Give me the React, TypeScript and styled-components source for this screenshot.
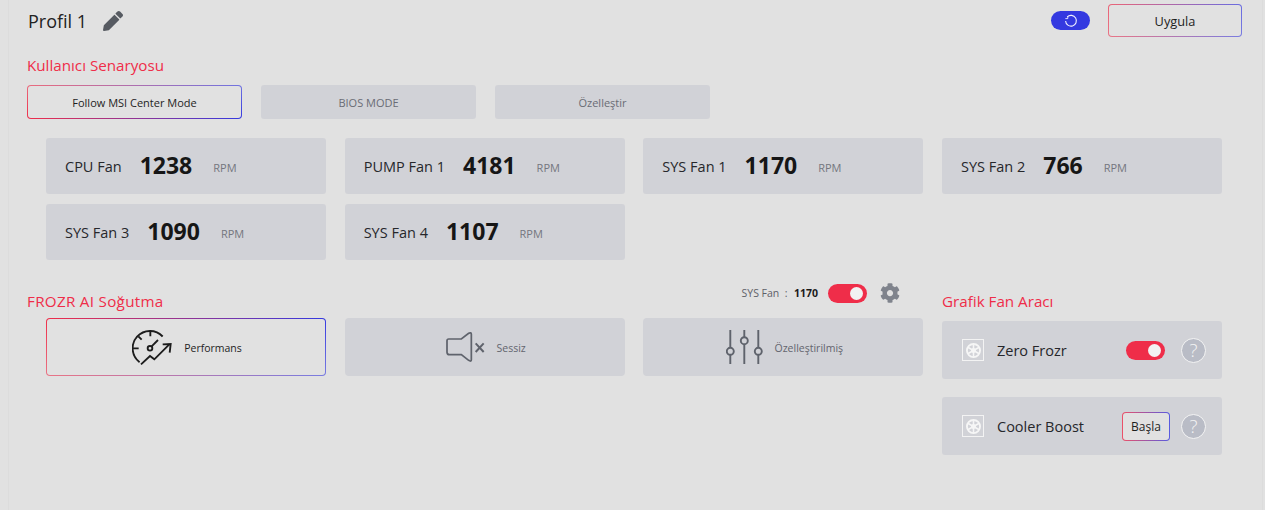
import styled, { createGlobalStyle } from 'styled-components';

const GlobalStyle = createGlobalStyle`
  html, body {
    margin: 0;
    padding: 0;
    background: #e1e1e1;
  }
  body {
    font-family: "Open Sans", "Noto Sans", sans-serif;
    color: #1e1e1e;
  }
`;

const RED = '#ef2d49';
const CARD = '#d1d2d7';
const fill = '#e1e1e1';
const veil = (a: number) => `rgba(225, 225, 225, ${a})`;

const gradientBorder = (top: number, bottom: number) => `
  linear-gradient(${fill}, ${fill}) padding-box,
  linear-gradient(to bottom, ${veil(top)}, ${veil(bottom)}) border-box,
  linear-gradient(to right, ${RED}, #3439e0) border-box
`;

const Page = styled.div`
  width: 1265px;
  height: 510px;
  box-sizing: border-box;
  padding: 0 23px 0 19px;
  overflow: hidden;
  background:
    linear-gradient(#dcdcdc, #dcdcdc) 8px 0 / 1px 100% no-repeat,
    linear-gradient(#dcdcdc, #dcdcdc) 1262px 0 / 1px 100% no-repeat,
    ${fill};
`;

const Header = styled.div`
  height: 42px;
  padding: 4px 0 0 9px;
  box-sizing: border-box;
  display: flex;
  align-items: flex-start;
  justify-content: space-between;
`;

const ProfileName = styled.div`
  display: flex;
  align-items: center;
  gap: 16px;
  height: 34px;
  font-size: 18px;
  color: #222;
`;

const HeaderActions = styled.div`
  display: flex;
  align-items: center;
  gap: 18px;
`;

const SyncPill = styled.div`
  width: 39px;
  height: 19px;
  border-radius: 10px;
  background: #3439e0;
  display: flex;
  align-items: center;
  justify-content: center;
`;

const GradientButton = styled.div<{ $w: number; $h: number; $size: number; $top?: number; $bottom?: number }>`
  width: ${({ $w }) => $w}px;
  height: ${({ $h }) => $h}px;
  box-sizing: border-box;
  display: flex;
  align-items: center;
  justify-content: center;
  font-size: ${({ $size }) => $size}px;
  color: #1e1e1e;
  border: 1px solid transparent;
  border-radius: 4px;
  background: ${({ $top, $bottom }) => gradientBorder($top ?? 0, $bottom ?? 0)};
`;

const SectionTitle = styled.div<{ $spacing?: number }>`
  font-size: 15.2px;
  line-height: 20px;
  color: ${RED};
  letter-spacing: ${({ $spacing }) => $spacing ?? 0}px;
`;

const ScenarioBlock = styled.section`
  padding-left: 8px;
  height: 83px;
  margin-top: 13px;
`;

const ScenarioRow = styled.div`
  margin-top: 10px;
  display: flex;
  gap: 19px;
`;

const FlatButton = styled.div`
  width: 215px;
  height: 34px;
  border-radius: 3px;
  background: ${CARD};
  color: #6a6c75;
  font-size: 11px;
  display: flex;
  align-items: center;
  justify-content: center;
`;

const FanGrid = styled.div`
  padding-left: 27px;
  display: grid;
  grid-template-columns: repeat(4, 280px);
  column-gap: 18.67px;
  row-gap: 10px;
`;

const FanCard = styled.div`
  height: 56px;
  border-radius: 3px;
  background: ${CARD};
  padding-left: 19px;
  display: flex;
  align-items: center;
`;

const FanName = styled.span`
  font-size: 14.5px;
  color: #26272b;
`;

const FanValue = styled.span`
  margin-left: 18px;
  margin-top: -2px;
  font-size: 23px;
  font-weight: 700;
  color: #161616;
`;

const FanUnit = styled.span`
  margin-left: 21px;
  margin-top: 3px;
  font-size: 11px;
  color: #74767e;
`;

const LowerArea = styled.div`
  margin-top: 19px;
  padding-left: 8px;
  display: flex;
`;

const FrozrColumn = styled.div`
  width: 915px;
`;

const FrozrHead = styled.div`
  height: 39px;
  display: flex;
  align-items: flex-start;
  justify-content: space-between;
  padding-right: 42px;
  ${SectionTitle} {
    margin-top: 12px;
  }
`;

const SysFan = styled.div`
  display: flex;
  align-items: center;
  height: 24px;
  margin-top: 2px;
  font-size: 10.5px;
  color: #5e6068;
  white-space: pre;
  b {
    margin-left: 1px;
    margin-right: 10px;
    color: #1b1b1b;
    font-size: 10.5px;
  }
  svg {
    margin-left: 13px;
  }
`;

const FrozrCards = styled.div`
  margin-left: 19px;
  display: grid;
  grid-template-columns: repeat(3, 280px);
  column-gap: 18.67px;
`;

const ModeCard = styled.div<{ $active?: boolean }>`
  height: 58px;
  box-sizing: border-box;
  padding-left: 2px;
  border-radius: 4px;
  border: 1px solid transparent;
  background: ${({ $active }) => ($active ? gradientBorder(0, 0.4) : CARD)};
  color: ${({ $active }) => ($active ? '#1e1e1e' : '#63656e')};
  font-size: 10.5px;
  display: flex;
  align-items: center;
  justify-content: center;
  gap: 12px;
`;

const ModeLabel = styled.span`
  margin-top: 2px;
`;

const ToolColumn = styled.div`
  width: 280px;
`;

const ToolTitle = styled(SectionTitle)`
  margin-top: 12px;
`;

const ToolCards = styled.div`
  margin-top: 10px;
  display: flex;
  flex-direction: column;
  gap: 18px;
`;

const ToolCard = styled.div`
  height: 58px;
  border-radius: 3px;
  background: ${CARD};
  padding: 0 16px 0 20px;
  display: flex;
  align-items: center;
`;

const ToolName = styled.span`
  margin-left: 13px;
  flex: 1;
  font-size: 14.5px;
  color: #26272b;
`;

const FanBadge = styled.div`
  width: 22px;
  height: 22px;
  box-sizing: border-box;
  border: 1px solid #f3f3f3;
  display: flex;
  align-items: center;
  justify-content: center;
`;

const Toggle = styled.div`
  position: relative;
  width: 39px;
  height: 19px;
  border-radius: 10px;
  background: ${RED};
  &::after {
    content: '';
    position: absolute;
    top: 3px;
    right: 4px;
    width: 13px;
    height: 13px;
    border-radius: 50%;
    background: #f2f2f2;
  }
`;

const Help = styled.div<{ $gap: number }>`
  width: 25px;
  height: 25px;
  margin-left: ${({ $gap }) => $gap}px;
  box-sizing: border-box;
  border: 1px solid #f4f4f4;
  border-radius: 50%;
  background: #b9bcc6;
  color: #f4f4f4;
  font-size: 19px;
  font-weight: 300;
  display: flex;
  align-items: center;
  justify-content: center;
`;

const PencilIcon = () => (
  <svg width="20" height="20" viewBox="0 0 512 512" fill="#565a61">
    <path d="M497.9 142.1l-46.1 46.1c-4.7 4.7-12.3 4.7-17 0l-111-111c-4.7-4.7-4.7-12.3 0-17l46.1-46.1c18.7-18.7 49.1-18.7 67.9 0l60.1 60.1c18.8 18.7 18.8 49.1 0 67.9zM284.2 99.8L21.6 362.4.4 483.9c-2.9 16.4 11.4 30.6 27.8 27.8l121.5-21.3 262.6-262.6c4.7-4.7 4.7-12.3 0-17l-111-111c-4.8-4.7-12.4-4.7-17.1 0z" />
  </svg>
);

const SyncIcon = () => (
  <svg width="14" height="14" viewBox="0 0 14 14" fill="none" stroke="#f0f0ff" strokeWidth="1.1">
    <path d="M3.2 2.9A5.4 5.4 0 1 1 1.6 7" />
    <path d="M1.4 4.6h2.4V2.2" strokeWidth="0.9" />
  </svg>
);

const GaugeIcon = () => (
  <svg width="40" height="35" viewBox="0 0 120 105" fill="none" stroke="#1c1c1c" strokeWidth="5.6">
    <path d="M92 19.5A52 52 0 1 0 22.7 96.5" />
    <path d="M55 2v17M3 55h17M19 19l10 10" />
    <circle cx="54" cy="55" r="7" />
    <path d="M59 49l19-19" />
    <path d="M27 103l27-25 13 10 45-45" />
    <path d="M92 43l24-1-3 26" />
  </svg>
);

const MuteIcon = () => (
  <svg width="39" height="30" viewBox="0 0 117 90" fill="none" stroke="#5f636c" strokeWidth="5.2">
    <path d="M3 26Q3 21 8 21H46L68 4Q76 0 76 7V83Q76 90 68 85L46 68H10Q3 68 3 61Z" />
    <path d="M89 34l24 26M113 34L89 60" strokeWidth="6" />
  </svg>
);

const SlidersIcon = () => (
  <svg width="37" height="34" viewBox="0 0 37 34" fill="none" stroke="#5f636c" strokeWidth="1.9">
    <path d="M4.3 0v17.6M4.3 25v9M18.3 0v7M18.3 14.4V34M32.3 0v17.6M32.3 25v9" />
    <circle cx="4.3" cy="21.3" r="3.5" />
    <circle cx="18.3" cy="10.7" r="3.5" />
    <circle cx="32.3" cy="21.3" r="3.5" />
  </svg>
);

const GearIcon = () => (
  <svg width="20" height="20" viewBox="0 0 512 512" fill="#7f838c">
    <path d="M487.4 315.7l-42.6-24.6c4.3-23.2 4.3-47 0-70.2l42.6-24.6c4.9-2.8 7.1-8.6 5.5-14-11.1-35.6-30-67.8-54.7-94.6-3.8-4.1-10-5.1-14.8-2.3L380.8 110c-17.9-15.4-38.5-27.3-60.8-35.1V25.8c0-5.6-3.9-10.5-9.4-11.7-36.7-8.2-74.3-7.8-109.2 0-5.5 1.2-9.4 6.1-9.4 11.7V75c-22.2 7.9-42.8 19.8-60.8 35.1L88.7 85.5c-4.9-2.8-11-1.9-14.8 2.3-24.7 26.7-43.6 58.9-54.7 94.6-1.7 5.4.6 11.2 5.5 14L67.3 221c-4.3 23.2-4.3 47 0 70.2l-42.6 24.6c-4.9 2.8-7.1 8.6-5.5 14 11.1 35.6 30 67.8 54.7 94.6 3.8 4.1 10 5.1 14.8 2.3l42.6-24.6c17.9 15.4 38.5 27.3 60.8 35.1v49.2c0 5.6 3.9 10.5 9.4 11.7 36.7 8.2 74.3 7.8 109.2 0 5.5-1.2 9.4-6.1 9.4-11.7v-49.2c22.2-7.9 42.8-19.8 60.8-35.1l42.6 24.6c4.9 2.8 11 1.9 14.8-2.3 24.7-26.7 43.6-58.9 54.7-94.6 1.5-5.5-.7-11.3-5.6-14.1zM256 336c-44.1 0-80-35.9-80-80s35.9-80 80-80 80 35.9 80 80-35.9 80-80 80z" />
  </svg>
);

const FanWheel = () => (
  <svg width="15" height="15" viewBox="0 0 16 16" fill="none" stroke="#f6f6f6" strokeWidth="1.7">
    <circle cx="8" cy="8" r="7" strokeWidth="2" />
    <circle cx="8" cy="8" r="1.8" fill="#f6f6f6" />
    <path d="M8 1v14M1.9 4.5l12.2 7M14.1 4.5l-12.2 7" />
  </svg>
);

const fans = [
  { name: 'CPU Fan', rpm: 1238 },
  { name: 'PUMP Fan 1', rpm: 4181 },
  { name: 'SYS Fan 1', rpm: 1170 },
  { name: 'SYS Fan 2', rpm: 766 },
  { name: 'SYS Fan 3', rpm: 1090 },
  { name: 'SYS Fan 4', rpm: 1107 },
];

const App = () => (
  <Page>
    <GlobalStyle />
    <Header>
      <ProfileName>
        Profil 1
        <PencilIcon />
      </ProfileName>
      <HeaderActions>
        <SyncPill>
          <SyncIcon />
        </SyncPill>
        <GradientButton $w={134} $h={33} $size={12.8} $top={0.3} $bottom={0.4}>Uygula</GradientButton>
      </HeaderActions>
    </Header>

    <ScenarioBlock>
      <SectionTitle>Kullanıcı Senaryosu</SectionTitle>
      <ScenarioRow>
        <GradientButton $w={215} $h={34} $size={11} $top={0.35}>Follow MSI Center Mode</GradientButton>
        <FlatButton>BIOS MODE</FlatButton>
        <FlatButton>Özelleştir</FlatButton>
      </ScenarioRow>
    </ScenarioBlock>

    <FanGrid>
      {fans.map((fan) => (
        <FanCard key={fan.name}>
          <FanName>{fan.name}</FanName>
          <FanValue>{fan.rpm}</FanValue>
          <FanUnit>RPM</FanUnit>
        </FanCard>
      ))}
    </FanGrid>

    <LowerArea>
      <FrozrColumn>
        <FrozrHead>
          <SectionTitle $spacing={0.3}>FROZR AI Soğutma</SectionTitle>
          <SysFan>
            {'SYS Fan  :  '}<b>1170</b>
            <Toggle />
            <GearIcon />
          </SysFan>
        </FrozrHead>
        <FrozrCards>
          <ModeCard $active>
            <GaugeIcon />
            <ModeLabel>Performans</ModeLabel>
          </ModeCard>
          <ModeCard>
            <MuteIcon />
            <ModeLabel>Sessiz</ModeLabel>
          </ModeCard>
          <ModeCard>
            <SlidersIcon />
            <ModeLabel>Özelleştirilmiş</ModeLabel>
          </ModeCard>
        </FrozrCards>
      </FrozrColumn>
      <ToolColumn>
        <ToolTitle>Grafik Fan Aracı</ToolTitle>
        <ToolCards>
          <ToolCard>
            <FanBadge><FanWheel /></FanBadge>
            <ToolName>Zero Frozr</ToolName>
            <Toggle />
            <Help $gap={16}>?</Help>
          </ToolCard>
          <ToolCard>
            <FanBadge><FanWheel /></FanBadge>
            <ToolName>Cooler Boost</ToolName>
            <GradientButton $w={48} $h={29} $size={12} $top={0.2} $bottom={0.2}>Başla</GradientButton>
            <Help $gap={11}>?</Help>
          </ToolCard>
        </ToolCards>
      </ToolColumn>
    </LowerArea>
  </Page>
);

export default App;
